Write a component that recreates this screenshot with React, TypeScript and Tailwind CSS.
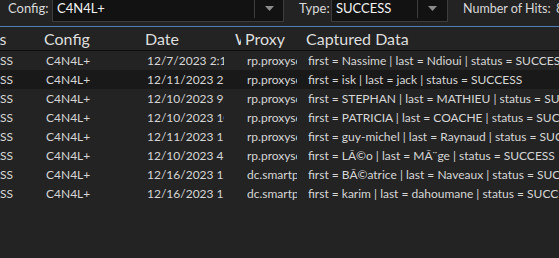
import React from 'react';

const rows = [
  { date: '12/7/2023 2:16 PM', proxy: 'rp.proxyscrape.com', data: 'first = Nassime | last = Ndioui | status = SUCCESS' },
  { date: '12/11/2023 2:05 PM', proxy: 'rp.proxyscrape.com', data: 'first = isk | last = jack | status = SUCCESS', active: true },
  { date: '12/10/2023 9:12 PM', proxy: 'rp.proxyscrape.com', data: 'first = STEPHAN | last = MATHIEU | status = SUCCESS' },
  { date: '12/10/2023 10:41 PM', proxy: 'rp.proxyscrape.com', data: 'first = PATRICIA | last = COACHE | status = SUCCESS' },
  { date: '12/11/2023 12:03 AM', proxy: 'rp.proxyscrape.com', data: 'first = guy-michel | last = Raynaud | status = SUCCESS' },
  { date: '12/10/2023 4:27 PM', proxy: 'rp.proxyscrape.com', data: 'first = LÃ©o | last = MÃ¨ge | status = SUCCESS' },
  { date: '12/16/2023 12:10 AM', proxy: 'dc.smartproxy.com', data: 'first = BÃ©atrice | last = Naveaux | status = SUCCESS' },
  { date: '12/16/2023 12:14 AM', proxy: 'dc.smartproxy.com', data: 'first = karim | last = dahoumane | status = SUCCESS' },
];

function Arrow() {
  return (
    <svg width="9" height="5" viewBox="0 0 9 5" className="shrink-0">
      <path d="M0 0 L9 0 L4.5 5 Z" fill="#8c8c8c" />
    </svg>
  );
}

function Combo({ value, width, textWidth }: { value: string; width: string; textWidth: string }) {
  return (
    <div className={`-mt-[4px] flex h-[26px] ${width} shrink-0 border border-[#3d3d3d] bg-[#121212]`}>
      <div className={`${textWidth} h-[21px] shrink-0 border-r border-[#3d3d3d] pl-[4px] pt-[3px] text-[13px] leading-[16px] text-[#f2f2f2]`}>
        {value}
      </div>
      <div className="flex flex-1 justify-center pt-[9px]">
        <Arrow />
      </div>
    </div>
  );
}

export default function App() {
  const cols = 'grid grid-cols-[81px_101px_88px_12px_61px_1fr]';

  return (
    <div className="h-[258px] w-[559px] overflow-hidden bg-[#232323] font-['Lato',sans-serif] text-[#d6d6d6]">
      {/* toolbar */}
      <div className="flex h-[26px] items-start whitespace-nowrap text-[13px] leading-[17px] text-[#d9d9d9]">
        <span className="w-[52px] shrink-0 pl-[8px]">Config:</span>
        <Combo value="C4N4L+" width="w-[232px]" textWidth="w-[202px]" />
        <span className="w-[47px] shrink-0 pl-[15px]">Type:</span>
        <Combo value="SUCCESS" width="w-[117px]" textWidth="w-[86px]" />
        <span className="w-[108px] shrink-0 pl-[15px] text-[12.5px]">Number of Hits:</span>
        <span className="shrink-0">8</span>
      </div>
      <div className="h-px bg-[#4f7fb3]" />

      {/* table */}
      <div className="-ml-[41px] whitespace-nowrap">
        <div className={`${cols} h-[24px] items-center border-b border-[#0e0e0e] text-[16px] text-[#dedede]`}>
          <div className="overflow-hidden pl-[4px]">Status</div>
          <div className="overflow-hidden pl-[4px]">Config</div>
          <div className="overflow-hidden pl-[4px]">Date</div>
          <div className="overflow-hidden pl-[6px]">Wordlist</div>
          <div className="overflow-hidden pl-[4px]">Proxy</div>
          <div className="overflow-hidden pl-[4px]">Captured Data</div>
        </div>
        {rows.map((r, i) => (
          <div
            key={i}
            className={`${cols} h-[19px] items-center text-[12px] ${r.active ? 'bg-[#191919]' : ''}`}
          >
            <div className="overflow-hidden pr-[27px] text-right">SUCCESS</div>
            <div className="overflow-hidden pl-[6px]">C4N4L+</div>
            <div className="pl-[6px] pr-[5px]">
              <div className="overflow-hidden">{r.date}</div>
            </div>
            <div />
            <div className="pl-[6px] pr-[5px]">
              <div className="overflow-hidden">{r.proxy}</div>
            </div>
            <div className="overflow-hidden pl-[6px]">{r.data}</div>
          </div>
        ))}
      </div>
    </div>
  );
}
